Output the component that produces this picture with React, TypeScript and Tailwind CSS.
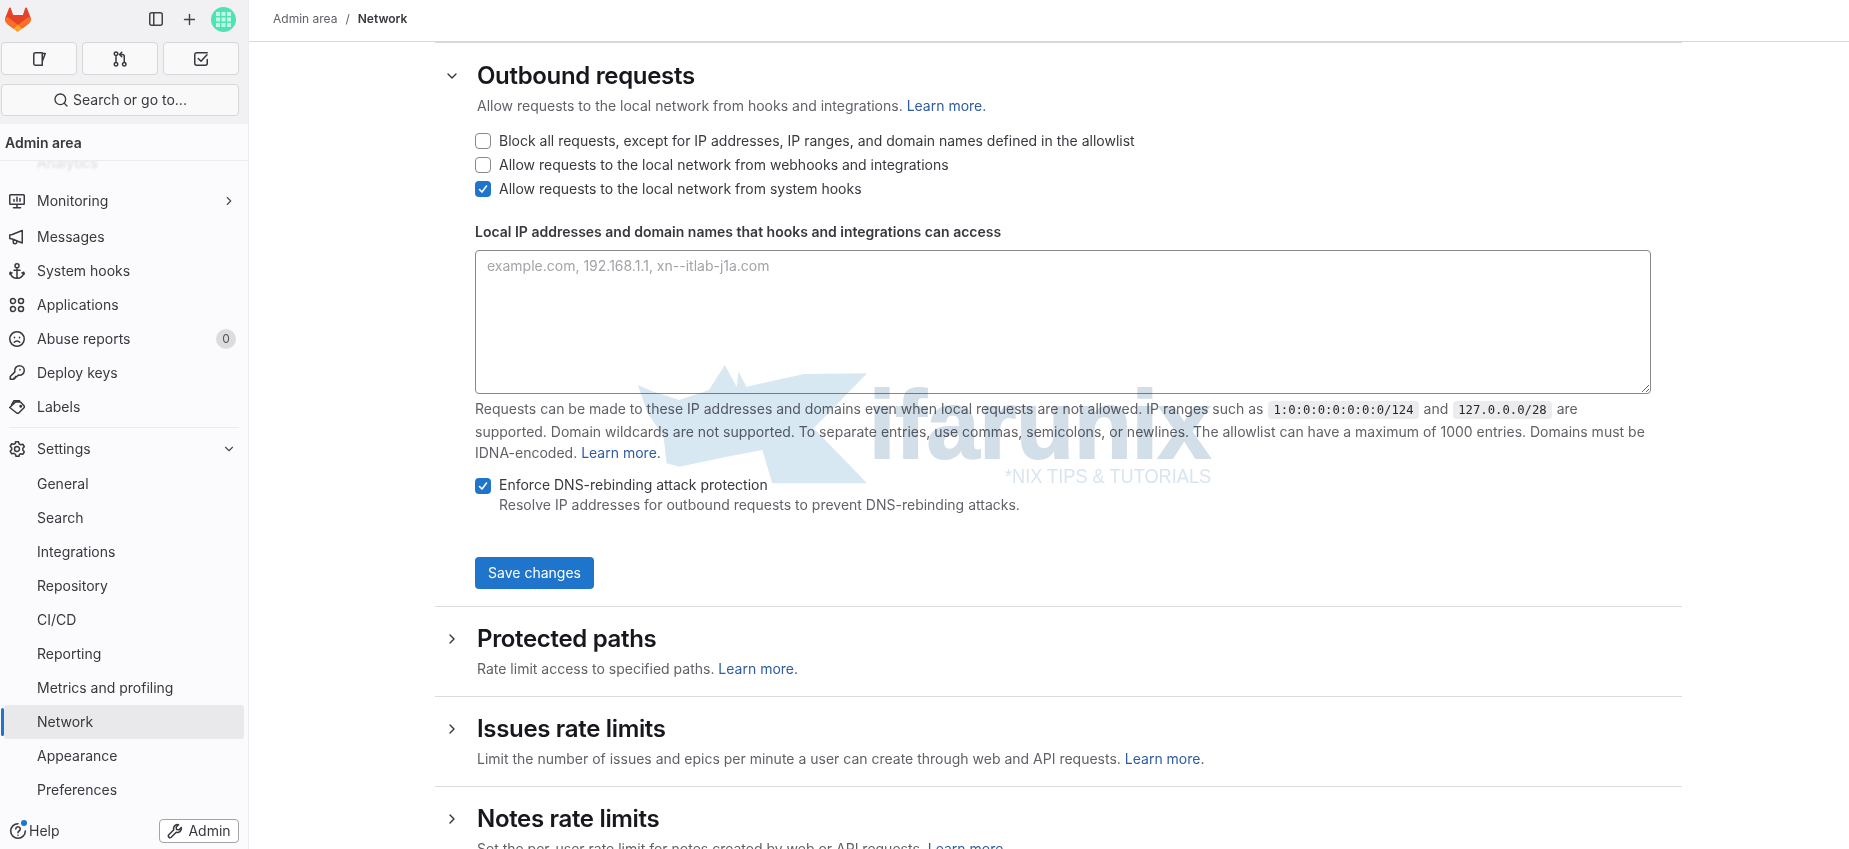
import { ChevronDown, ChevronRight, Plus, Search } from "lucide-react"

const font = { fontFamily: "Inter, sans-serif" }

function Icon({ d, size = 16 }: { d: string; size?: number }) {
    return (
        <svg width={size} height={size} viewBox="0 0 16 16" fill="none" stroke="currentColor" strokeWidth="1.5" strokeLinecap="round" strokeLinejoin="round" className="shrink-0">
            <path d={d} />
        </svg>
    )
}

const icons = {
    monitor: "M1.500 1.750h13a.75.75 0 0 1 .75.75v8a.75.75 0 0 1-.75.75h-13a.75.75 0 0 1-.75-.75v-8a.75.75 0 0 1 .75-.75zM4.500 14.750h7M8 11.250v3.500M5 8.250V6.500M8 8.250V4.250M11 8.250V5.500",
    messages: "M.75 6v3.500l2.500.5 10 4V1.500L3.250 5.500.75 6zM4.250 10.500V13a1.750 1.750 0 0 0 3.500 0v-1",
    hooks: "M8 4.750v10.500M5 7.250h6M1.250 9.250c0 3.500 3 6 6.750 6s6.750-2.500 6.750-6M8 .75a2 2 0 1 1 0 4 2 2 0 0 1 0-4zM.75 11l.5-1.750 1.750.75M15.250 11l-.5-1.750L13 10",
    apps: "M1.500 4a2.500 2.500 0 1 1 5 0 2.500 2.500 0 0 1-5 0zM9.500 4a2.500 2.500 0 1 1 5 0 2.500 2.500 0 0 1-5 0zM1.500 12a2.500 2.500 0 1 1 5 0 2.500 2.500 0 0 1-5 0zM9.500 12a2.500 2.500 0 1 1 5 0 2.500 2.500 0 0 1-5 0z",
    abuse: "M.75 8a7.250 7.250 0 1 1 14.500 0A7.250 7.250 0 0 1 .75 8zM5.250 11.250c.7-.9 1.600-1.250 2.750-1.250s2.050.35 2.750 1.250M5.500 6.250v.5M10.500 6.250v.5",
    key: "M5.750 5.500a4.750 4.750 0 1 1 4.750 4.750c-.4 0-.8-.05-1.150-.15L8 11.500H6.500V13H5v1.250H1.250V11.500l4.650-4.650a4.700 4.700 0 0 1-.15-1.350zM11 4.500v.5",
    labels: "M.75 8.500 6.500 3h5L15.250 7v1.500L9.500 14.250H8L.75 8.500zM2.500 6 5 1.750h5.500M11 7.250a.75.75 0 1 0 0-.01",
    settings: "M6.500.75h3l.5 2 1.800 1.050 2-.55 1.500 2.500-1.450 1.500v2.100l1.450 1.500-1.500 2.500-2-.55L10.500 13.350l-.5 1.900h-3l-.5-1.900-1.800-1.050-2 .55-1.500-2.500L2.650 8.850v-2.100L1.200 5.250l1.500-2.500 2 .55L6.500 2.250 6.500.75zM5.500 8a2.500 2.500 0 1 0 5 0 2.500 2.500 0 0 0-5 0z",
}

function NavRow({ icon, label, children, className = "h-[34px]" }: { icon?: string; label: string; children?: React.ReactNode; className?: string }) {
    return (
        <div className={`flex items-center pl-[9px] pr-[12px] text-sm text-[#3a383f] ${className}`}>
            <span className="w-[28px] shrink-0 flex text-[#3a383f]">{icon && <Icon d={icon} />}</span>
            <span className="flex-1">{label}</span>
            {children}
        </div>
    )
}

function SubRow({ label, active }: { label: string; active?: boolean }) {
    return (
        <div className={`relative flex items-center h-[34px] mx-[4px] pl-[33px] text-sm rounded-[3px] text-[#3a383f] ${active ? "bg-[#e9e8ea]" : ""}`}>
            {active && <span className="absolute left-[-3px] top-[3px] bottom-[3px] w-[3px] rounded-sm bg-[#1f75cb]" />}
            {label}
        </div>
    )
}

function LearnMore() {
    return <span className="text-[#2f5ca0]">Learn more.</span>
}

function Checkbox({ checked }: { checked?: boolean }) {
    return (
        <span className={`w-4 h-4 shrink-0 rounded-[4px] flex items-center justify-center ${checked ? "bg-[#1f75cb]" : "bg-white border border-[#89888d]"}`}>
            {checked && (
                <svg width="10" height="10" viewBox="0 0 10 10" fill="none" stroke="white" strokeWidth="1.6" strokeLinecap="round" strokeLinejoin="round">
                    <path d="M1.5 5.5 4 8l4.5-6" />
                </svg>
            )}
        </span>
    )
}

function CheckRow({ checked, label }: { checked?: boolean; label: string }) {
    return (
        <div className="flex items-center gap-[8px] h-[24px] text-sm text-[#3a383f]">
            <Checkbox checked={checked} />
            <span>{label}</span>
        </div>
    )
}

function Code({ children }: { children: string }) {
    return <code className="mx-[1px] px-[5px] py-[2px] rounded bg-[#ececef] text-[12.25px] text-[#28272d]" style={{ fontFamily: "'DejaVu Sans Mono', monospace" }}>{children}</code>
}

function Collapsed({ title, children }: { title: string; children: React.ReactNode }) {
    return (
        <section className="border-b border-[#dcdcde] h-[90px] pt-[16px] flex shrink-0">
            <div className="w-[42px] pl-[9px] pt-[8px] text-[#333238]"><ChevronRight size={16} /></div>
            <div>
                <h4 className="text-2xl leading-[32px] font-semibold tracking-[-0.33px] text-[#18171d]">{title}</h4>
                <p className="mt-[4px] text-sm text-[#626168]">{children}</p>
            </div>
        </section>
    )
}

const avatarCells = [
    [5, 5], [10.500, 5], [16, 5],
    [5, 10.500], [10.500, 10.500], [16, 10.500],
    [5, 16], [10.500, 16], [16, 16],
]

export default function App() {
    return (
        <div className="flex h-[849px] overflow-hidden bg-white" style={font}>
            <aside className="w-[249px] shrink-0 flex flex-col bg-[#fbfafd] border-r border-[#ececef]">
                <div className="h-[124px] bg-[#f1f1f3] shrink-0 px-[1px]">
                    <div className="h-[38px] flex items-center pl-[4px] pr-[11px]">
                        <svg width="26" height="25" viewBox="0 0 26 25" className="shrink-0">
                            <path d="M25.4 10 25.3 9.8 21.9 1a.9.9 0 0 0-1.7.1l-2.3 7H8.1l-2.3-7A.9.9 0 0 0 4.1 1L.7 9.8.6 10a6.3 6.3 0 0 0 2.1 7.3l5.2 3.9 2.6 1.9 1.5 1.2a1.100 1.100 0 0 0 1.200 0l1.500-1.200 2.600-1.900 5.200-3.900A6.300 6.300 0 0 0 25.400 10z" fill="#e24329" />
                            <path d="M25.400 10l-.1-.200a11.500 11.500 0 0 0-4.600 2.100L13 17.700l4.900 3.500 5.200-3.900A6.300 6.300 0 0 0 25.400 10z" fill="#fc6d26" />
                            <path d="M8.100 21.200l2.600 1.900 1.500 1.200a1.100 1.100 0 0 0 1.200 0l1.500-1.200 2.600-1.900L13 17.700z" fill="#fca326" />
                            <path d="M5.300 11.900A11.500 11.500 0 0 0 .7 9.800L.6 10a6.300 6.300 0 0 0 2.100 7.300l5.200 3.900 5.100-3.500z" fill="#fc6d26" />
                        </svg>
                        <div className="flex-1" />
                        <span className="text-[#434248] mr-[17px]">
                            <svg width="16" height="16" viewBox="0 0 16 16" fill="none" stroke="currentColor" strokeWidth="1.5"><rect x="1.75" y="1.75" width="12.5" height="12.500" rx="2" /><path d="M5.750 1.750v12.500" /></svg>
                        </span>
                        <Plus size={17} className="text-[#434248] mr-[13px]" />
                        <svg width="25" height="25" viewBox="0 0 25 25" className="shrink-0">
                            <circle cx="12.500" cy="12.500" r="12.500" fill="#4fe3b4" />
                            {avatarCells.map(([x, y]) => (
                                <rect key={`${x}-${y}`} x={x} y={y} width="4" height="4" fill="#c4f6e5" />
                            ))}
                        </svg>
                    </div>
                    <div className="grid grid-cols-3 gap-[5px] mt-[4px] pr-[8px]">
                        {["M4.500 1.750h6.750v12.500H4.500A1.750 1.750 0 0 1 2.750 12.500v-9A1.750 1.750 0 0 1 4.500 1.750zM11.250 2.500h3l-3 8",
                          "M4 1a1.750 1.750 0 1 0 0 3.500A1.750 1.750 0 0 0 4 1zM4 11.500a1.750 1.750 0 1 0 0 3.500 1.750 1.750 0 0 0 0-3.500zM12.250 11.500a1.750 1.750 0 1 0 0 3.500 1.750 1.750 0 0 0 0-3.500zM4 4.500v7M12.250 11.500V5.500a2 2 0 0 0-2-2H8M9.750 1.250 7.500 3.500l2.250 2.250",
                          "M14.250 8.500v3.750a2 2 0 0 1-2 2h-8.500a2 2 0 0 1-2-2v-8.500a2 2 0 0 1 2-2h10.500M5.250 7.500 8 10.250l6-6.500"].map((d) => (
                            <div key={d} className="h-[33px] bg-white/60 border border-[#d7d7da] rounded-[4px] flex items-center justify-center text-[#3a383f]">
                                <Icon d={d} />
                            </div>
                        ))}
                    </div>
                    <div className="mt-[9px] mr-[8px] h-[32px] bg-white/60 border border-[#d7d7da] rounded-[4px] flex items-center justify-center gap-[4px] text-sm text-[#3a383f]">
                        <Search size={16} />
                        Search or go to...
                    </div>
                </div>
                <div className="h-[37px] shrink-0 flex items-center pl-[5px] pt-[1px] text-sm font-semibold text-[#3a383f] border-b border-[#ececef]">Admin area</div>
                <div className="relative flex-1 overflow-hidden">
                    <div className="absolute left-[9px] top-[-8px] text-sm text-[#dcdce0] blur-[1px] pl-[28px]">Analytics</div>
                    <div className="flex flex-col pt-[21px]">
                        <NavRow icon={icons.monitor} label="Monitoring" className="h-[38px]"><ChevronRight size={14} className="text-[#4c4b52]" /></NavRow>
                        <NavRow icon={icons.messages} label="Messages" />
                        <NavRow icon={icons.hooks} label="System hooks" />
                        <NavRow icon={icons.apps} label="Applications" />
                        <NavRow icon={icons.abuse} label="Abuse reports">
                            <span className="w-[20px] h-[20px] rounded-full bg-[#dcdcde] text-xs text-[#55545a] flex items-center justify-center">0</span>
                        </NavRow>
                        <NavRow icon={icons.key} label="Deploy keys" />
                        <NavRow icon={icons.labels} label="Labels" />
                        <div className="h-px bg-[#ececef] mx-[9px] mt-[3px] mb-[3px]" />
                        <NavRow icon={icons.settings} label="Settings" className="h-[35px] mb-[1px]"><ChevronDown size={14} className="text-[#4c4b52]" /></NavRow>
                        {["General", "Search", "Integrations", "Repository", "CI/CD", "Reporting", "Metrics and profiling"].map((l) => (
                            <SubRow key={l} label={l} />
                        ))}
                        <SubRow label="Network" active />
                        <SubRow label="Appearance" />
                        <SubRow label="Preferences" />
                    </div>
                </div>
                <div className="h-[36px] shrink-0 flex items-center justify-between pl-[9px] pr-[9px] text-sm text-[#3a383f]">
                    <span className="relative flex items-center gap-[2px]">
                        <svg width="18" height="18" viewBox="0 0 16 16" fill="none" stroke="currentColor" strokeWidth="1.400" strokeLinecap="round"><path d="M14.500 8A6.500 6.500 0 1 1 8 1.500M6 6.200a2 2 0 1 1 3 1.800c-.7.400-1 .8-1 1.500M8 11.700v.1" /></svg>
                        <span className="absolute left-[12px] top-[-1px] w-[6px] h-[6px] rounded-full bg-[#1f75cb]" />
                        Help
                    </span>
                    <span className="w-[80px] h-[24px] bg-white border border-[#a4a3a8] rounded-[4px] flex items-center justify-center gap-[5px]">
                        <Icon d="M10.500 1.500a4 4 0 0 0-3.700 5.300L1.800 11.800a1.700 1.700 0 0 0 2.400 2.400l5-5A4 4 0 0 0 14.300 4.500L12 6.800 9.500 6.500 9.200 4l2.300-2.300c-.3-.1-.7-.2-1-.2z" />
                        Admin
                    </span>
                </div>
            </aside>
            <main className="relative flex-1 flex flex-col min-w-0">
                <div className="h-[42px] shrink-0 border-b border-[#d8d8da] flex items-center pl-[24px] pb-[4px] text-xs gap-[8px]">
                    <span className="text-[#626168]">Admin area</span>
                    <span className="text-[#626168]">/</span>
                    <span className="font-semibold text-[#3a383f]">Network</span>
                </div>
                <div className="ml-[186px] w-[1247px] flex flex-col flex-1 overflow-hidden">
                    <section className="border-t border-b border-t-[#d8d8da] border-b-[#dcdcde] h-[565px] shrink-0 pt-[17px] flex">
                        <div className="w-[42px] pl-[9px] pt-[8px] text-[#333238]"><ChevronDown size={16} /></div>
                        <div className="flex-1 mr-[31px]">
                            <h4 className="text-2xl leading-[32px] font-semibold tracking-[-0.33px] text-[#18171d]">Outbound requests</h4>
                            <p className="mt-[4px] text-sm text-[#626168]">Allow requests to the local network from hooks and integrations. <LearnMore /></p>
                            <div className="-ml-[2px] mt-[13px]">
                                <CheckRow label="Block all requests, except for IP addresses, IP ranges, and domain names defined in the allowlist" />
                                <CheckRow label="Allow requests to the local network from webhooks and integrations" />
                                <CheckRow checked label="Allow requests to the local network from system hooks" />
                                <div className="mt-[21px] text-sm font-semibold text-[#3a383f]">Local IP addresses and domain names that hooks and integrations can access</div>
                                <textarea readOnly placeholder="example.com, 192.168.1.1, xn--itlab-j1a.com" className="block mt-[8px] w-[1176px] h-[144px] rounded-[4px] border border-[#89888d] bg-transparent px-[11px] py-[5px] text-sm placeholder:text-[#a4a3a8] outline-none" />
                                <p className="mt-[4px] w-[1176px] text-sm leading-[21px] text-[#626168]">
                                    Requests can be made to these IP addresses and domains even when local requests are not allowed. IP ranges such as <Code>1:0:0:0:0:0:0:0/124</Code> and <Code>127.0.0.0/28</Code> are supported. Domain wildcards are not supported. To separate entries, use commas, semicolons, or newlines. The allowlist can have a maximum of 1000 entries. Domains must be IDNA-encoded. <LearnMore />
                                </p>
                                <div className="mt-[12px] flex gap-[8px]">
                                    <div className="pt-[3px]"><Checkbox checked /></div>
                                    <div className="text-sm leading-[20px]">
                                        <div className="text-[#3a383f]">Enforce DNS-rebinding attack protection</div>
                                        <div className="text-[#626168]">Resolve IP addresses for outbound requests to prevent DNS-rebinding attacks.</div>
                                    </div>
                                </div>
                                <button className="mt-[42px] w-[119px] h-[32px] rounded-[4px] bg-[#1f75cb] text-white text-sm">Save changes</button>
                            </div>
                        </div>
                    </section>
                    <Collapsed title="Protected paths">Rate limit access to specified paths. <LearnMore /></Collapsed>
                    <Collapsed title="Issues rate limits">Limit the number of issues and epics per minute a user can create through web and API requests. <LearnMore /></Collapsed>
                    <Collapsed title="Notes rate limits">Set the per-user rate limit for notes created by web or API requests. <LearnMore /></Collapsed>
                </div>
                <div className="absolute left-[371px] top-[350px] w-[620px] h-[150px] pointer-events-none mix-blend-multiply">
                    <svg width="620" height="150" viewBox="0 0 1568 450" preserveAspectRatio="none" className="absolute left-0 top-0">
                        <path d="M45 105 85 125 150 150 225 120 265 45 295 110 300 65 320 110 465 72 625 70 490 235 625 400 385 400 360 300 270 320 150 350 118 340 110 260 70 190z" fill="#d8e8f3" />
                    </svg>
                    <span className="absolute left-[249px] top-[27px] text-[96px] leading-[96px] font-bold text-[#d3dfe8] [-webkit-text-stroke:2px_#d3dfe8] scale-x-[0.985] origin-left whitespace-nowrap" style={{ fontFamily: "'Liberation Sans', sans-serif" }}>ifarunix</span>
                    <span className="absolute left-[385px] top-[115px] text-[21px] leading-[21px] font-normal text-[#d8e5f0] scale-x-[0.866] origin-left whitespace-nowrap" style={{ fontFamily: "'Liberation Sans', sans-serif" }}>*NIX TIPS &amp; TUTORIALS</span>
                </div>
            </main>
        </div>
    )
}
